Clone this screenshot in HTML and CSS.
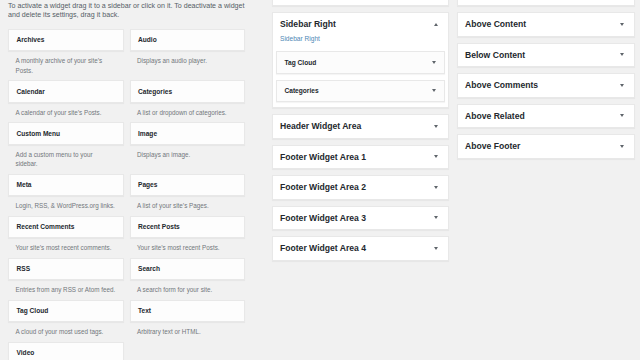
FILE: index.html
```html
<!DOCTYPE html>
<html lang="en">
<head>
  <meta charset="UTF-8" />
  <meta name="viewport" content="width=device-width, initial-scale=1" />
  <title>Widgets</title>
  <link rel="stylesheet" href="styles.css">
</head>
<body>
  <main class="page">
    <section class="available" aria-label="Available Widgets">
      <p class="intro">To activate a widget drag it to a sidebar or click on it. To deactivate a widget<br>and delete its settings, drag it back.</p>
      <div class="widget-grid">
        <div class="widget"><div class="widget-top">Archives</div><p class="widget-desc">A monthly archive of your site’s<br>Posts.</p></div>
        <div class="widget"><div class="widget-top">Audio</div><p class="widget-desc">Displays an audio player.</p></div>
        <div class="widget"><div class="widget-top">Calendar</div><p class="widget-desc">A calendar of your site’s Posts.</p></div>
        <div class="widget"><div class="widget-top">Categories</div><p class="widget-desc">A list or dropdown of categories.</p></div>
        <div class="widget"><div class="widget-top">Custom Menu</div><p class="widget-desc">Add a custom menu to your<br>sidebar.</p></div>
        <div class="widget"><div class="widget-top">Image</div><p class="widget-desc">Displays an image.</p></div>
        <div class="widget"><div class="widget-top">Meta</div><p class="widget-desc">Login, RSS, &amp; WordPress.org links.</p></div>
        <div class="widget"><div class="widget-top">Pages</div><p class="widget-desc">A list of your site’s Pages.</p></div>
        <div class="widget"><div class="widget-top">Recent Comments</div><p class="widget-desc">Your site’s most recent comments.</p></div>
        <div class="widget"><div class="widget-top">Recent Posts</div><p class="widget-desc">Your site’s most recent Posts.</p></div>
        <div class="widget"><div class="widget-top">RSS</div><p class="widget-desc">Entries from any RSS or Atom feed.</p></div>
        <div class="widget"><div class="widget-top">Search</div><p class="widget-desc">A search form for your site.</p></div>
        <div class="widget"><div class="widget-top">Tag Cloud</div><p class="widget-desc">A cloud of your most used tags.</p></div>
        <div class="widget"><div class="widget-top">Text</div><p class="widget-desc">Arbitrary text or HTML.</p></div>
        <div class="widget"><div class="widget-top">Video</div></div>
      </div>
    </section>

    <section class="sidebars" aria-label="Sidebars">
      <div class="area stub"></div>
      <div class="area open">
        <div class="area-head">Sidebar Right<span class="toggle up"></span></div>
        <p class="area-desc">Sidebar Right</p>
        <div class="area-widgets">
          <div class="widget-top">Tag Cloud<span class="toggle"></span></div>
          <div class="widget-top">Categories<span class="toggle"></span></div>
        </div>
      </div>
      <div class="area"><div class="area-head">Header Widget Area<span class="toggle"></span></div></div>
      <div class="area"><div class="area-head">Footer Widget Area 1<span class="toggle"></span></div></div>
      <div class="area"><div class="area-head">Footer Widget Area 2<span class="toggle"></span></div></div>
      <div class="area"><div class="area-head">Footer Widget Area 3<span class="toggle"></span></div></div>
      <div class="area"><div class="area-head">Footer Widget Area 4<span class="toggle"></span></div></div>
    </section>

    <section class="sidebars right" aria-label="More Sidebars">
      <div class="area stub"></div>
      <div class="area"><div class="area-head">Above Content<span class="toggle"></span></div></div>
      <div class="area"><div class="area-head">Below Content<span class="toggle"></span></div></div>
      <div class="area"><div class="area-head">Above Comments<span class="toggle"></span></div></div>
      <div class="area"><div class="area-head">Above Related<span class="toggle"></span></div></div>
      <div class="area"><div class="area-head">Above Footer<span class="toggle"></span></div></div>
    </section>
  </main>
</body>
</html>
```

FILE: styles.css
```css
* {
  box-sizing: border-box;
  margin: 0;
  padding: 0;
}
body {
  background: #f1f1f1;
  font-family: 'Liberation Sans', Arial, sans-serif;
  color: #23282d;
  overflow: hidden;
}
.page {
  display: flex;
  align-items: flex-start;
  padding-left: 8px;
}

/* available widgets */
.available {
  width: 237px;
  margin-right: 27px;
  flex-shrink: 0;
}
.intro {
  font-size: 7.1px;
  line-height: 9px;
  color: #555d66;
  padding-top: 1.5px;
  margin-bottom: 9.2px;
  white-space: nowrap;
}
.widget-grid {
  display: grid;
  grid-template-columns: 1fr 1fr;
  column-gap: 6px;
}
.widget-top {
  display: flex;
  align-items: center;
  justify-content: space-between;
  height: 22.5px;
  padding: 0 8.5px 0 7.5px;
  background: #fdfdfd;
  border: 1px solid #e8e8e8;
  box-shadow: 0 1px 1px rgba(0,0,0,0.04);
  font-size: 6.6px;
  font-weight: 700;
}
.widget-desc {
  font-size: 6.3px;
  line-height: 9.5px;
  padding: 5px 7.5px;
  color: #72777c;
  white-space: nowrap;
}

/* sidebars */
.sidebars {
  width: 177px;
  flex-shrink: 0;
  display: flex;
  flex-direction: column;
  gap: 6px;
  margin-top: -18.5px;
}
.sidebars.right {
  width: 178px;
  margin-left: 8px;
}
.area {
  background: #fff;
  border: 1px solid #e8e8e8;
  box-shadow: 0 1px 1px rgba(0,0,0,0.04);
}
.area.stub {
  height: 24.5px;
}
.area-head {
  display: flex;
  align-items: center;
  justify-content: space-between;
  height: 22.5px;
  padding: 0 10.5px 0 7px;
  font-size: 8.6px;
  font-weight: 700;
}
.area-desc {
  font-size: 6.6px;
  line-height: 9px;
  color: #4f88b5;
  padding-left: 7px;
  margin-top: -1.5px;
}
.area-widgets {
  display: flex;
  flex-direction: column;
  gap: 6px;
  padding: 8px 3px 5px;
}
.area-widgets .widget-top {
  background: #fcfcfc;
  padding-left: 7.5px;
}
.toggle {
  width: 0;
  height: 0;
  border-left: 2.5px solid transparent;
  border-right: 2.5px solid transparent;
  border-top: 3px solid #5f656b;
}
.toggle.up {
  border-top: none;
  border-bottom: 3px solid #5f656b;
}
```
